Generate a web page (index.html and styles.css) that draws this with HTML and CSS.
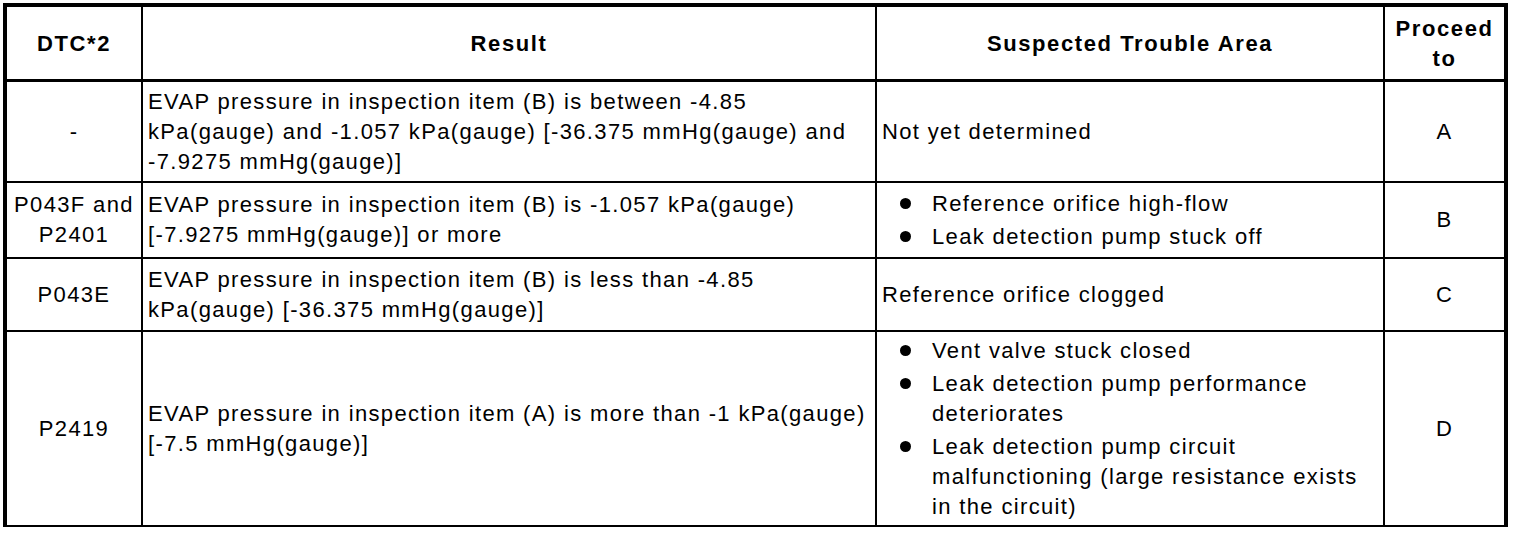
FILE: index.html
```html
<!DOCTYPE html>
<html lang="en">
<head>
<meta charset="utf-8">
<title>DTC table</title>
<link rel="stylesheet" href="styles.css">
</head>
<body>
<div class="dtc-table">
  <div class="cell head">DTC*2</div>
  <div class="cell head">Result</div>
  <div class="cell head">Suspected Trouble Area</div>
  <div class="cell head">Proceed<br>to</div>

  <div class="cell center">-</div>
  <div class="cell text">EVAP pressure in inspection item (B) is between -4.85<br>kPa(gauge) and -1.057 kPa(gauge) [-36.375 mmHg(gauge) and<br>-7.9275 mmHg(gauge)]</div>
  <div class="cell text">Not yet determined</div>
  <div class="cell center">A</div>

  <div class="cell center">P043F and<br>P2401</div>
  <div class="cell text">EVAP pressure in inspection item (B) is -1.057 kPa(gauge)<br>[-7.9275 mmHg(gauge)] or more</div>
  <div class="cell list-cell">
    <ul class="bullets">
      <li>Reference orifice high-flow</li>
      <li>Leak detection pump stuck off</li>
    </ul>
  </div>
  <div class="cell center">B</div>

  <div class="cell center">P043E</div>
  <div class="cell text">EVAP pressure in inspection item (B) is less than -4.85<br>kPa(gauge) [-36.375 mmHg(gauge)]</div>
  <div class="cell text">Reference orifice clogged</div>
  <div class="cell center">C</div>

  <div class="cell center">P2419</div>
  <div class="cell text">EVAP pressure in inspection item (A) is more than -1 kPa(gauge)<br>[-7.5 mmHg(gauge)]</div>
  <div class="cell list-cell">
    <ul class="bullets">
      <li>Vent valve stuck closed</li>
      <li>Leak detection pump performance<br>deteriorates</li>
      <li>Leak detection pump circuit<br>malfunctioning (large resistance exists<br>in the circuit)</li>
    </ul>
  </div>
  <div class="cell center">D</div>
</div>
</body>
</html>
```

FILE: styles.css
```css
html, body {
  background: #ffffff;
}

body {
  margin: 3px;
  font-family: "Liberation Sans", Arial, Helvetica, sans-serif;
  font-size: 22px;
  line-height: 30px;
  color: #000000;
  letter-spacing: 1.35px;
}

.dtc-table {
  width: 1505px;
  height: 524px;
  box-sizing: border-box;
  border: 4px solid #000000;
  background: #000000;
  display: grid;
  grid-template-columns: 134px 732px 506px 119px;
  grid-template-rows: 73px 99px 74px 71px 193px;
  gap: 2px;
}

.cell {
  background: #ffffff;
  display: flex;
  align-items: center;
  white-space: nowrap;
}

.head {
  justify-content: center;
  text-align: center;
  font-weight: bold;
  letter-spacing: 1.6px;
  border-bottom: 1px solid #000000;
  padding-top: 1px;
}

.center {
  justify-content: center;
  text-align: center;
}

.text {
  padding-left: 5px;
}

.bullets {
  list-style: none;
  margin: 0;
  padding: 0 0 0 23px;
  display: flex;
  flex-direction: column;
  gap: 3px;
}

.bullets li {
  position: relative;
  padding-left: 32px;
}

.bullets li::before {
  content: "";
  position: absolute;
  left: 0;
  top: 9px;
  width: 11px;
  height: 11px;
  border-radius: 50%;
  background: #000000;
}
```
